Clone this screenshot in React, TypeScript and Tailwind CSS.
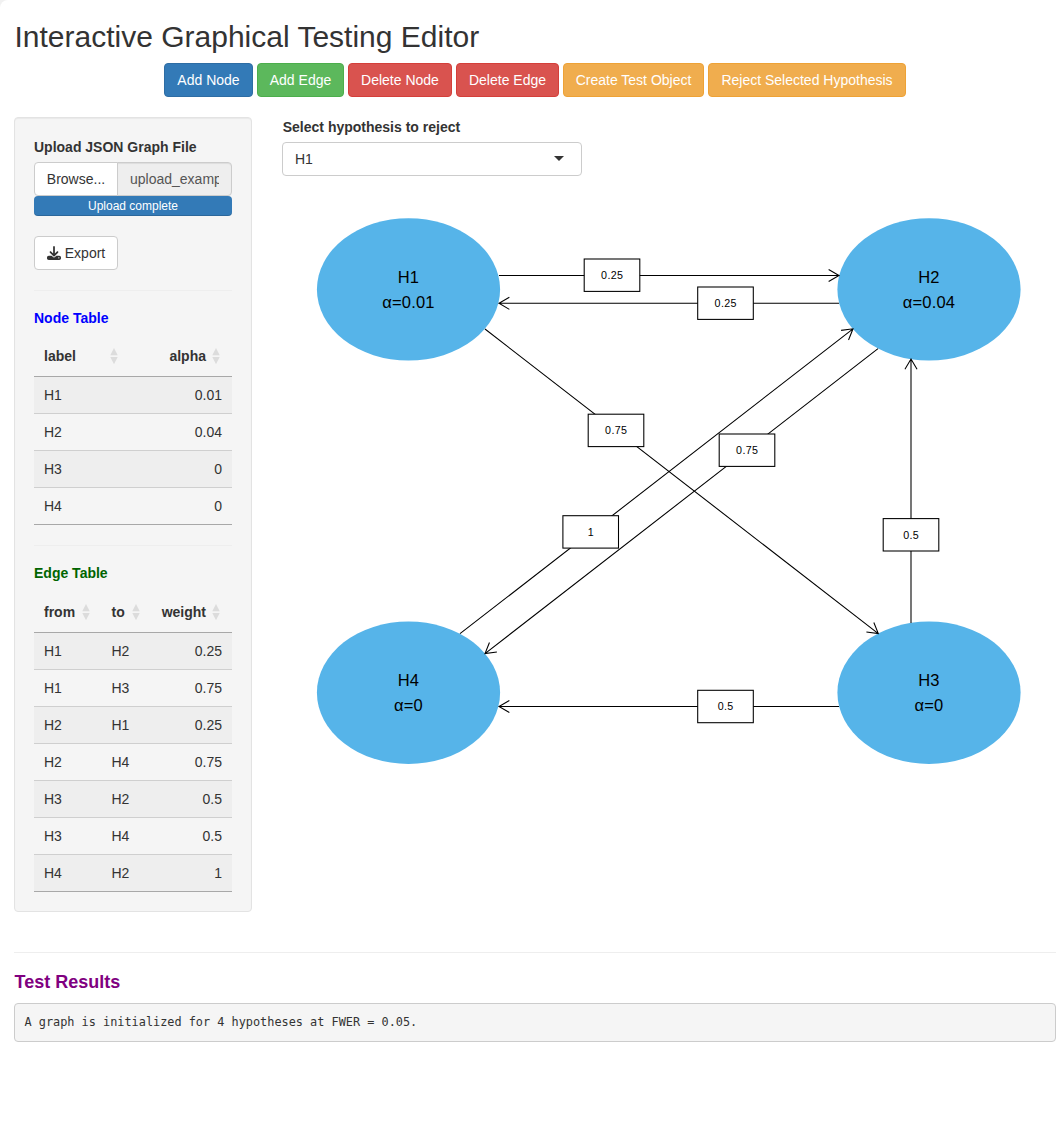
import { FaDownload } from "react-icons/fa6";

const buttons = [
  { label: "Add Node", cls: "w-[89px] bg-[#337ab7] border-[#2e6da4]" },
  { label: "Add Edge", cls: "w-[87px] bg-[#5cb85c] border-[#4cae4c]" },
  { label: "Delete Node", cls: "w-[104px] bg-[#d9534f] border-[#d43f3a]" },
  { label: "Delete Edge", cls: "w-[103px] bg-[#d9534f] border-[#d43f3a]" },
  { label: "Create Test Object", cls: "w-[141px] bg-[#f0ad4e] border-[#eea236]" },
  { label: "Reject Selected Hypothesis", cls: "w-[198px] bg-[#f0ad4e] border-[#eea236]" },
];

const nodeRows = [
  ["H1", "0.01"],
  ["H2", "0.04"],
  ["H3", "0"],
  ["H4", "0"],
];

const edgeRows = [
  ["H1", "H2", "0.25"],
  ["H1", "H3", "0.75"],
  ["H2", "H1", "0.25"],
  ["H2", "H4", "0.75"],
  ["H3", "H2", "0.5"],
  ["H3", "H4", "0.5"],
  ["H4", "H2", "1"],
];

const nodes = [
  { x: 126.5, y: 98.2, label: "H1", alpha: "α=0.01" },
  { x: 647, y: 98.2, label: "H2", alpha: "α=0.04" },
  { x: 647, y: 501.5, label: "H3", alpha: "α=0" },
  { x: 126.5, y: 501.5, label: "H4", alpha: "α=0" },
];

const edges = [
  { from: [217, 84.5], to: [557, 84.5], box: [330, 84.2], weight: "0.25" },
  { from: [557, 112.3], to: [217, 112.3], box: [443.5, 112.2], weight: "0.25" },
  { from: [203, 138], to: [596.3, 442.6], box: [334, 239.4], weight: "0.75" },
  { from: [596, 157.7], to: [203, 462.6], box: [465, 259.2], weight: "0.75" },
  { from: [629, 432], to: [629, 168], box: [629, 343.8], weight: "0.5" },
  { from: [557, 515.5], to: [217, 515.5], box: [443.5, 515.5], weight: "0.5" },
  { from: [178, 442.7], to: [571, 137.8], box: [308.7, 340.9], weight: "1" },
];

function SortIcon() {
  return (
    <svg width="8" height="18" viewBox="0 0 8 18" className="shrink-0" fill="#dcdcdc">
      <path d="M4 1 7.7 8.3H.3Z" />
      <path d="M4 17.3 .3 10H7.7Z" />
    </svg>
  );
}

function Head({ cols }: { cols: { name: string; cls: string }[] }) {
  return (
    <div className="flex h-[40px] items-center border-b border-[#a8a8a8] pb-[2px] font-bold">
      {cols.map((c) => (
        <div key={c.name} className={`flex items-center ${c.cls}`}>
          <span>{c.name}</span>
          <SortIcon />
        </div>
      ))}
    </div>
  );
}

function Rows({ rows, cols }: { rows: string[][]; cols: string[] }) {
  return (
    <div className="border-b border-[#a8a8a8]">
      {rows.map((row, i) => (
        <div
          key={i}
          className={`flex items-center ${i === 0 ? "h-[36px]" : "h-[37px] border-t border-[#cfcfcf]"} ${
            i % 2 === 0 ? "bg-[#eeeeee]" : ""
          }`}
        >
          {row.map((v, j) => (
            <div key={j} className={cols[j]}>
              {v}
            </div>
          ))}
        </div>
      ))}
    </div>
  );
}

function Arrow({ from, to }: { from: number[]; to: number[] }) {
  const angle = Math.atan2(to[1] - from[1], to[0] - from[0]);
  const wing = (d: number) =>
    `${to[0] - 12 * Math.cos(angle + d)} ${to[1] - 12 * Math.sin(angle + d)}`;
  return (
    <path
      d={`M${from[0]} ${from[1]}L${to[0]} ${to[1]}M${wing(0.53)}L${to[0]} ${to[1]}L${wing(-0.53)}`}
      fill="none"
      stroke="#000"
      strokeWidth="1.07"
    />
  );
}

function Graph() {
  return (
    <svg width="781" height="600" viewBox="0 0 781 600" fontFamily="Liberation Sans, Arial, sans-serif" textAnchor="middle">
      {nodes.map((n) => (
        <g key={n.label}>
          <ellipse cx={n.x} cy={n.y + 0.2} rx="91.6" ry="71.2" fill="#56b4e9" />
          <text x={n.x} y={n.y - 6.2} fontSize="16.5" letterSpacing="0.2">
            {n.label}
          </text>
          <text x={n.x} y={n.y + 18.8} fontSize="16.5" letterSpacing="0.2">
            {n.alpha}
          </text>
        </g>
      ))}
      {edges.map((e, i) => (
        <Arrow key={i} from={e.from} to={e.to} />
      ))}
      {edges.map((e, i) => (
        <g key={i}>
          <rect x={e.box[0] - 27.8} y={e.box[1] - 16.2} width="55.6" height="32.4" fill="#fff" stroke="#000" strokeWidth="1.07" />
          <text x={e.box[0] + 0.2} y={e.box[1] + 3.8} fontSize="10.7" letterSpacing="0.35">
            {e.weight}
          </text>
        </g>
      ))}
    </svg>
  );
}

export default function App() {
  return (
    <div className="min-h-[1123px] w-[1063px] overflow-hidden bg-[#f1f1f1] font-['Liberation_Sans',Arial,sans-serif] text-[14px] leading-5 text-[#333]">
      <div className="min-h-[1123px] rounded-tl-lg bg-white pr-[7px] pl-[14px]">
        <h1 className="pt-5 pl-[0.5px] text-[30px] leading-[33px]">Interactive Graphical Testing Editor</h1>
        <div className="mt-[10px] flex justify-center gap-1">
          {buttons.map((b) => (
            <button key={b.label} className={`h-[34px] shrink-0 rounded-[4px] border whitespace-nowrap text-white ${b.cls}`}>
              {b.label}
            </button>
          ))}
        </div>
        <div className="mt-5 flex items-start">
          <aside className="h-[795px] w-[238px] shrink-0 rounded-[4px] border border-[#e3e3e3] bg-[#f5f5f5] p-[19px] shadow-[inset_0_1px_1px_rgba(0,0,0,0.05)]">
            <div className="mb-[5px] font-bold">Upload JSON Graph File</div>
            <div className="flex h-[34px]">
              <button className="w-[84px] shrink-0 rounded-l-[4px] border border-[#ccc] bg-white">Browse...</button>
              <div className="-ml-px flex min-w-0 flex-1 items-center rounded-r-[4px] border border-[#ccc] bg-[#eee] px-3 text-[#555] shadow-[inset_0_1px_1px_rgba(0,0,0,0.075)]">
                <span className="overflow-hidden whitespace-nowrap">upload_example.json</span>
              </div>
            </div>
            <div className="h-5 rounded-[4px] bg-[#337ab7] text-center text-xs leading-5 text-white shadow-[inset_0_-1px_0_rgba(0,0,0,0.15)]">
              Upload complete
            </div>
            <button className="mt-5 flex h-[34px] w-[84px] items-center justify-center gap-1 rounded-[4px] border border-[#ccc] bg-white">
              <FaDownload className="size-[14px]" />
              Export
            </button>
            <div className="mt-5 h-px bg-[#eee]" />
            <div className="mt-[17px] font-bold text-[#0000ff]">Node Table</div>
            <div className="mt-[9px]">
              <Head
                cols={[
                  { name: "label", cls: "w-[94px] justify-between pl-[10px] pr-[10px]" },
                  { name: "alpha", cls: "flex-1 justify-end gap-[6px] pr-[12px]" },
                ]}
              />
              <Rows rows={nodeRows} cols={["pl-[10px] w-[94px]", "flex-1 pr-[10px] text-right"]} />
            </div>
            <div className="mt-5 h-px bg-[#eee]" />
            <div className="mt-[17px] font-bold text-[#006400]">Edge Table</div>
            <div className="mt-[10px]">
              <Head
                cols={[
                  { name: "from", cls: "w-[67.5px] justify-between pl-[10px] pr-[11.5px]" },
                  { name: "to", cls: "w-[49.5px] justify-between pl-[10px] pr-[11px]" },
                  { name: "weight", cls: "flex-1 justify-end gap-[6px] pr-[12px]" },
                ]}
              />
              <Rows rows={edgeRows} cols={["pl-[10px] w-[67.5px]", "pl-[10px] w-[49.5px]", "flex-1 pr-[10px] text-right"]} />
            </div>
          </aside>
          <main className="ml-[30px] flex-1">
            <div className="mb-[5px] pl-[0.75px] font-bold">Select hypothesis to reject</div>
            <div className="flex h-[34px] w-[300px] items-center justify-between rounded-[4px] border border-[#ccc] bg-white pr-[17px] pl-3">
              <span>H1</span>
              <svg width="10" height="5" viewBox="0 0 10 5" className="mt-[-2px]" fill="#333">
                <path d="M0 0H10L5 5Z" />
              </svg>
            </div>
            <div className="mt-[15px]">
              <Graph />
            </div>
          </main>
        </div>
        <div className="mt-10 h-px bg-[#eee]" />
        <h2 className="mt-[19px] pl-[0.5px] text-[18px] font-bold text-[#800080]">Test Results</h2>
        <pre className="mt-[11px] h-[39px] rounded-[4px] border border-[#ccc] bg-[#f5f5f5] px-[9.5px] py-[9px] font-['DejaVu_Sans_Mono','Liberation_Mono',monospace] text-[11.87px] leading-[19px]">
          A graph is initialized for 4 hypotheses at FWER = 0.05.
        </pre>
      </div>
    </div>
  );
}
